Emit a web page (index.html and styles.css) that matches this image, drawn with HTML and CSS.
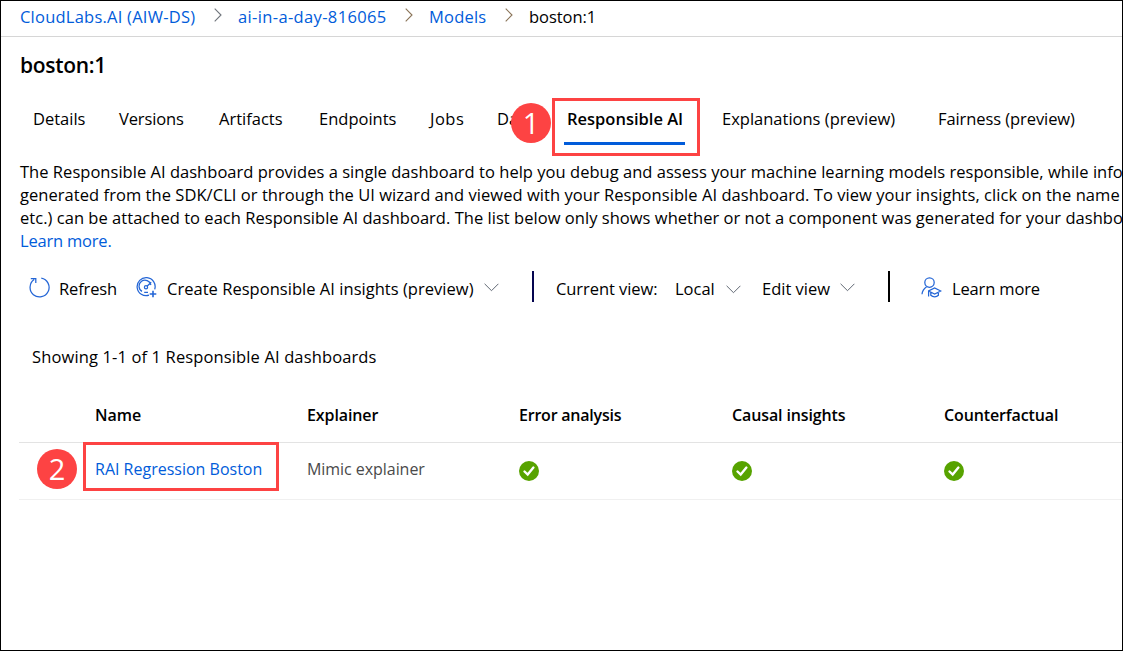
FILE: index.html
```
<!DOCTYPE html>
<html lang="en">
<head>
<meta charset="utf-8">
<title>boston:1</title>
<link rel="stylesheet" href="styles.css">
</head>
<body>
<div class="frame">
  <nav class="crumbs">
    <a class="c1">CloudLabs.AI (AIW-DS)</a>
    <svg class="sep" viewBox="0 0 8 14"><path d="M.7 .7 7 7 .7 13.3"/></svg>
    <a class="c2">ai-in-a-day-816065</a>
    <svg class="sep warm" viewBox="0 0 8 14"><path d="M.7 .7 7 7 .7 13.3"/></svg>
    <a class="c3">Models</a>
    <svg class="sep warm" viewBox="0 0 8 14"><path d="M.7 .7 7 7 .7 13.3"/></svg>
    <span class="c4">boston:1</span>
  </nav>
  <h1 class="title">boston:1</h1>
  <div class="tabs">
    <span class="t-details">Details</span>
    <span class="t-versions">Versions</span>
    <span class="t-artifacts">Artifacts</span>
    <span class="t-endpoints">Endpoints</span>
    <span class="t-jobs">Jobs</span>
    <span class="t-data">Data</span>
    <span class="active">Responsible AI<i class="outline outline-tab"></i><i class="badge badge-1">1</i></span>
    <span class="t-expl">Explanations (preview)</span>
    <span class="t-fair">Fairness (preview)</span>
  </div>
  <div class="intro">
    <p class="l1">The Responsible AI dashboard provides a single dashboard to help you debug and assess your machine learning models responsible, while info</p>
    <p class="l2">generated from the SDK/CLI or through the UI wizard and viewed with your Responsible AI dashboard. To view your insights, click on the name</p>
    <p class="l3">etc.) can be attached to each Responsible AI dashboard. The list below only shows whether or not a component was generated for your dashbo</p>
    <p><a>Learn more.</a></p>
  </div>
  <div class="toolbar">
    <svg class="icon" viewBox="0 0 21 21"><path d="M12.3 1.1A9.5 9.5 0 1 1 5.2 2.6M1.8 1.5H6.8V6.1"/></svg>
    <span class="b-refresh">Refresh</span>
    <svg class="icon" viewBox="0 0 21 21"><path d="M13 18.2A9 9 0 1 1 18.7 12.4M6 14.4A6 6 0 1 1 14.9 8M8.2 15.4H12M11 9.2 15.2 5.2"/><circle cx="10" cy="10.2" r="1.6"/><path class="strong" d="M17 13.7V20.3M13.7 17H20.3"/></svg>
    <span class="b-create">Create Responsible AI insights (preview)</span>
    <svg class="chev" viewBox="0 0 15 9"><path d="M.6 .8 7.5 7.7 14.4 .8"/></svg>
    <i class="rule navy"></i>
    <span class="b-cur">Current view:</span>
    <span class="b-local">Local</span>
    <svg class="chev low" viewBox="0 0 15 9"><path d="M.6 .8 7.5 7.7 14.4 .8"/></svg>
    <span class="b-edit">Edit view</span>
    <svg class="chev" viewBox="0 0 15 9"><path d="M.6 .8 7.5 7.7 14.4 .8"/></svg>
    <i class="rule"></i>
    <svg class="icon" viewBox="0 0 21 21"><circle cx="8.5" cy="5.6" r="4.7"/><path d="M1 17.3C1.3 13.8 3 11.6 5.6 9.8M7.6 19.4V14L13.6 11 19.8 14 13.6 17 7.6 14M9.8 15.2V18.2C12 20.3 15.4 20.3 17.4 18.2V15.2"/></svg>
    <span class="b-learn">Learn more</span>
  </div>
  <div class="count">Showing 1-1 of 1 Responsible AI dashboards</div>
  <div class="table">
    <div class="row head">
      <span>Name</span><span class="h-exp">Explainer</span><span class="h-err">Error analysis</span><span class="h-cau">Causal insights</span><span class="h-cou">Counterfactual</span>
    </div>
    <div class="row data">
      <span class="name"><a>RAI Regression Boston</a><i class="outline outline-name"></i><i class="badge badge-2">2</i></span>
      <span class="muted">Mimic explainer</span>
      <svg class="ok" viewBox="0 0 20 20"><circle cx="10" cy="10" r="10"/><path d="M5.5 10.5 8.7 13.6 14.4 6.6"/></svg>
      <svg class="ok" viewBox="0 0 20 20"><circle cx="10" cy="10" r="10"/><path d="M5.5 10.5 8.7 13.6 14.4 6.6"/></svg>
      <svg class="ok" viewBox="0 0 20 20"><circle cx="10" cy="10" r="10"/><path d="M5.5 10.5 8.7 13.6 14.4 6.6"/></svg>
    </div>
  </div>
</div>
</body>
</html>
```
FILE: styles.css
```
* { box-sizing: border-box; }
body {
  margin: 0;
  background: #fff;
  color: #000;
  font: 16.5px/23px "Open Sans", "Noto Sans", sans-serif;
}
a { color: #015cda; }
svg { fill: none; display: block; }
.frame {
  width: 1123px;
  height: 651px;
  border: 1px solid #000;
  overflow: hidden;
  white-space: nowrap;
}

.crumbs {
  display: grid;
  grid-template-columns: 194px 24px 167px 24px 76px 24px auto;
  align-items: center;
  height: 36px;
  padding: 0 0 4px 19px;
  border-bottom: 1px solid #d6d6d6;
}
.c1 { letter-spacing: .23px; }
.c2 { letter-spacing: .36px; }
.c3 { letter-spacing: .2px; }
.c4 { letter-spacing: -.05px; }
.sep { width: 8px; height: 14px; margin-bottom: 3px; }
.sep path { stroke: #70757c; stroke-width: 1.1; }
.sep.warm path { stroke: #8a7458; }

.title {
  height: 56px;
  margin: 0;
  padding-left: 19px;
  font-size: 21px;
  font-weight: 600;
  line-height: 56px;
  letter-spacing: -.3px;
}

.tabs {
  display: grid;
  grid-template-columns: 86px 100px 100px 111px 67px 67px 158px 216px auto;
  height: 52px;
  padding-left: 32px;
  line-height: 51px;
}
.t-versions { letter-spacing: -.12px; }
.t-jobs { letter-spacing: .5px; }
.t-fair { letter-spacing: -.08px; }
.active {
  position: relative;
  justify-self: start;
  width: 121px;
  height: 51px;
  margin-left: 0;
  padding-left: 3px;
  font-weight: 600;
}
.active::after {
  content: "";
  display: block;
  height: 3px;
  margin: -2px 0 0 -3px;
  background: #015cda;
}
.outline { position: absolute; border: 3px solid #fd4343; }
.outline-tab { left: -12px; top: 5px; width: 148px; height: 58px; }
.badge {
  position: absolute;
  width: 40px;
  height: 40px;
  border-radius: 50%;
  background: #fd4343;
  color: #fff;
  font: 400 29px/40px "Open Sans", sans-serif;
  text-align: center;
}
.badge-1 { left: -53px; top: 10px; }

.intro { height: 108px; padding: 15px 0 0 19px; }
.intro p { margin: 0; }
.l1 { letter-spacing: .028px; }
.l2 { letter-spacing: .05px; }
.l3 { letter-spacing: .034px; }
.intro a { letter-spacing: -.2px; }

.toolbar {
  display: grid;
  grid-template-columns: 30px 77px 31px 317px 48px 24px 119px 51px 36px 78px 48px 33px 31px auto;
  align-items: center;
  height: 70px;
  padding-left: 28px;
}
.icon { width: 21px; height: 21px; margin-bottom: 1px; stroke: #2466d6; stroke-width: 1.25; }
.icon .strong { stroke-width: 1.6; }
.b-refresh { letter-spacing: -.15px; }
.b-create { letter-spacing: .03px; }
.b-cur { letter-spacing: -.07px; }
.b-learn { letter-spacing: -.15px; }
.chev { width: 15px; height: 9px; stroke: #606873; margin-bottom: 2px; }
.chev.low { margin: 2px 0 0; }
.rule { width: 1.5px; height: 31px; margin-bottom: 3px; background: #000; }
.rule.navy { background: #050550; }

.count { height: 68px; padding-left: 31px; line-height: 67px; letter-spacing: .13px; }

.table { padding-left: 18px; font-size: 16px; }
.row {
  display: grid;
  grid-template-columns: 212px 212px 213px 212px auto;
  align-items: center;
  padding-left: 76px;
}
.head { height: 52px; padding-bottom: 2px; font-weight: 600; border-bottom: 1px solid #e3e3e3; }
.h-exp { letter-spacing: -.1px; }
.h-err { letter-spacing: -.22px; }
.h-cau, .h-cou { letter-spacing: -.12px; }
.data { height: 57px; border-bottom: 1px solid #f0f0f0; }
.name { position: relative; height: 56px; line-height: 53px; }
.muted { color: #4a4a4a; height: 56px; line-height: 53px; letter-spacing: -.05px; }
.outline-name { left: -12px; top: -1px; width: 196px; height: 49px; }
.badge-2 { left: -58px; top: 6px; }
.ok { width: 20px; height: 20px; }
.ok circle { fill: #57a300; }
.ok path { stroke: #fff; stroke-width: 2.4; stroke-linecap: round; }
```
